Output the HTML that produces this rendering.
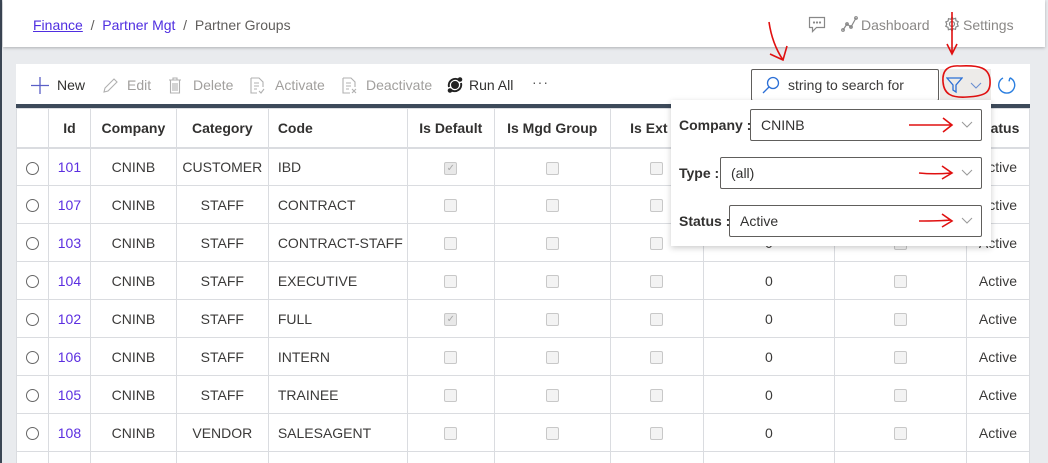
<!DOCTYPE html>
<html style="overflow:hidden;width:1048px;height:463px"><head><meta charset="utf-8"><style>
*{box-sizing:border-box;margin:0;padding:0}
body{width:1048px;height:463px;overflow:hidden;background:#e9ebee;font-family:"Liberation Sans",sans-serif;font-size:14px;color:#323130;position:relative}
.abs{position:absolute}
.hdr{left:3px;top:0;width:1042px;height:47px;background:#fff;box-shadow:0 1px 3px rgba(0,0,0,.25)}
.lstrip{left:0;top:0;width:2px;height:463px;background:#3b4654}
.tb{left:16px;top:64px;width:1014px;height:41px;background:#fff}
.tbar{left:16px;top:104px;width:1014px;height:4px;background:#3d4a5a}
.wrap{left:16px;top:108px;width:1014px;height:355px;background:#fff;overflow:hidden}
table{border-collapse:collapse;table-layout:fixed;position:absolute;left:0;top:0}
td,th{border:1px solid #dadce0;height:38px;text-align:center;font-size:14px;color:#3b3a39;font-weight:normal;white-space:nowrap;overflow:hidden}
th{font-weight:bold;color:#323130;height:39px;border-bottom:2px solid #dadce0}
td.l,th.l{text-align:left;padding-left:9px}
td.id{color:#5b2ee0}
.cb{display:inline-block;width:13px;height:13px;border:1px solid #c8c8c8;border-radius:2px;background:#f3f3f3;vertical-align:middle}
.rad{display:inline-block;width:13px;height:13px;border:1px solid #666;border-radius:50%;vertical-align:middle}
.tbi{top:77px;font-size:14px;color:#a19f9d}
.sel{border:1px solid #605e5c;border-radius:2px;height:32px;background:#fff;padding-left:10px;line-height:30px;font-size:14px}
.lab{font-weight:bold;font-size:14px;color:#323130}
</style></head><body>
<div class="abs lstrip"></div>
<div class="abs hdr"></div>
<div class="abs" style="left:33px;top:17px;font-size:14px;color:#605e5c"><span style="color:#4f2ee0;text-decoration:underline">Finance</span>&nbsp; / &nbsp;<span style="color:#4f2ee0">Partner Mgt</span>&nbsp; / &nbsp;Partner Groups</div>
<svg class="abs" style="left:808px;top:16px" width="18" height="17" viewBox="0 0 18 17" fill="none" stroke="#888" stroke-width="1.2"><path d="M1.5 1.5h15v10h-8l-4 4v-4h-3z"/><circle cx="6" cy="6.5" r=".5"/><circle cx="9" cy="6.5" r=".5"/><circle cx="12" cy="6.5" r=".5"/></svg>
<svg class="abs" style="left:841px;top:16px" width="17" height="16" viewBox="0 0 17 16" fill="none" stroke="#888" stroke-width="1.2"><path d="M2 14l4-6 4 3 5-9"/><circle cx="2" cy="14" r="1.3"/><circle cx="6" cy="8" r="1.3"/><circle cx="10" cy="11" r="1.3"/><circle cx="15" cy="2" r="1.3"/></svg>
<div class="abs" style="left:861px;top:17px;color:#8a8886">Dashboard</div>
<svg class="abs" style="left:944px;top:16px" width="16" height="16" viewBox="0 0 16 16" fill="none" stroke="#888" stroke-width="1.2"><circle cx="8" cy="8" r="2.5"/><path d="M8 1l1.3 2 2.3-.7.4 2.4 2.2 1-1 2.2 1 2.2-2.3.9-.4 2.4-2.3-.7L8 15l-1.3-2-2.3.7-.4-2.4-2.2-1 1-2.2-1-2.2 2.3-.9.4-2.4 2.3.7z"/></svg>
<div class="abs" style="left:963px;top:17px;color:#8a8886">Settings</div>
<svg class="abs" style="left:945px;top:10px" width="14" height="48" viewBox="0 0 14 48" fill="none" stroke="#e01010" stroke-width="1.6"><path d="M7 2v42M2 34l5 10 5-10"/></svg>

<div class="abs tb"></div>
<div class="abs tbar"></div>
<svg class="abs" style="left:31px;top:77px" width="18" height="17" viewBox="0 0 18 17" stroke="#5b5fc7" stroke-width="1.3"><path d="M9 0v17M0 8.5h18"/></svg>
<div class="abs tbi" style="left:57px;color:#323130">New</div>
<svg class="abs" style="left:102px;top:77px" width="17" height="17" viewBox="0 0 17 17" fill="none" stroke="#b0b0b0" stroke-width="1.1"><path d="M2 15l1-4 9-9 3 3-9 9z"/></svg>
<div class="abs tbi" style="left:127px">Edit</div>
<svg class="abs" style="left:168px;top:77px" width="14" height="17" viewBox="0 0 14 17" fill="none" stroke="#b0b0b0" stroke-width="1.1"><path d="M1 3h12M5 3V1h4v2M2.5 3v13h9V3M5 6v8M7 6v8M9 6v8"/></svg>
<div class="abs tbi" style="left:193px">Delete</div>
<svg class="abs" style="left:250px;top:77px" width="15" height="17" viewBox="0 0 15 17" fill="none" stroke="#b0b0b0" stroke-width="1.1"><path d="M1 1h8l4 4v5M1 1v15h6M4 6h5M4 9h5M4 12h3M9 14l2 2 3-4"/></svg>
<div class="abs tbi" style="left:275px">Activate</div>
<svg class="abs" style="left:342px;top:77px" width="16" height="17" viewBox="0 0 16 17" fill="none" stroke="#b0b0b0" stroke-width="1.1"><path d="M1 1h8l4 4v5M1 1v15h7M4 6h5M4 9h5M4 12h3M10 12l4 4M14 12l-4 4"/></svg>
<div class="abs tbi" style="left:366px">Deactivate</div>
<svg class="abs" style="left:446px;top:76px" width="18" height="18" viewBox="0 0 18 18" fill="none" stroke="#222" stroke-width="2"><path d="M3 11a6.5 6.5 0 0 1 10-7M15 7a6.5 6.5 0 0 1-10 7"/><circle cx="9" cy="9" r="3" fill="#222"/><circle cx="14" cy="3.5" r="1.3" fill="#222"/><circle cx="4" cy="14.5" r="1.3" fill="#222"/></svg>
<div class="abs tbi" style="left:469px;color:#323130">Run All</div>
<div class="abs tbi" style="left:532px;color:#555;top:74px;letter-spacing:1px">···</div>

<div class="abs" style="left:751px;top:69px;width:188px;height:32px;border:1px solid #605e5c;border-radius:2px;background:#fff"></div>
<svg class="abs" style="left:762px;top:76px" width="18" height="18" viewBox="0 0 18 18" fill="none" stroke="#2b6fd6" stroke-width="1.3"><circle cx="11" cy="7" r="5.5"/><path d="M7 11l-6 6"/></svg>
<div class="abs" style="left:788px;top:77px;color:#3b3a39">string to search for</div>
<div class="abs" style="left:940px;top:69px;width:51px;height:32px;background:#edebe9"></div>
<svg class="abs" style="left:946px;top:76px" width="17" height="18" viewBox="0 0 17 18" fill="none" stroke="#2b6fd6" stroke-width="1.3"><path d="M1 2h15l-6 7v7l-3-2V9z"/></svg>
<svg class="abs" style="left:970px;top:82px" width="12" height="7" viewBox="0 0 12 7" fill="none" stroke="#6a8fd0" stroke-width="1.1"><path d="M1 1l5 5 5-5"/></svg>
<svg class="abs" style="left:940px;top:62px" width="54" height="40" viewBox="0 0 54 40" fill="none" stroke="#e01010" stroke-width="1.6"><path d="M20 4C8 3 2 8 3 20c1 12 8 16 24 15 18-1 24-4 23-17C49 6 40 3 20 4z"/></svg>
<svg class="abs" style="left:997px;top:75px" width="20" height="20" viewBox="0 0 20 20" fill="none" stroke="#2b7fe0" stroke-width="1.4"><path d="M13 2.8A8 8 0 1 1 6 3"/><path d="M13 2.8l-1 3.5"/></svg>
<svg class="abs" style="left:766px;top:20px" width="24" height="44" viewBox="0 0 24 44" fill="none" stroke="#e01010" stroke-width="1.6"><path d="M3 2c2 14 6 26 14 38M4 34l13 6 4-14"/></svg>

<div class="abs wrap">
<table>
<colgroup><col style="width:32px"><col style="width:42px"><col style="width:86px"><col style="width:92px"><col style="width:139px"><col style="width:87px"><col style="width:116px"><col style="width:93px"><col style="width:132px"><col style="width:132px"><col style="width:63px"></colgroup>
<tr><th></th><th>Id</th><th>Company</th><th>Category</th><th class="l">Code</th><th>Is Default</th><th>Is Mgd Group</th><th>Is Ext M</th><th></th><th></th><th>Status</th></tr>
<tr><td><span class="rad"></span></td><td class="id">101</td><td>CNINB</td><td>CUSTOMER</td><td class="l">IBD</td><td><span class="cb" style="background:#e8e8e8;font-size:10px;line-height:11px;color:#aaa">✓</span></td><td><span class="cb"></span></td><td><span class="cb"></span></td><td>0</td><td><span class="cb"></span></td><td>Active</td></tr>
<tr><td><span class="rad"></span></td><td class="id">107</td><td>CNINB</td><td>STAFF</td><td class="l">CONTRACT</td><td><span class="cb"></span></td><td><span class="cb"></span></td><td><span class="cb"></span></td><td>0</td><td><span class="cb"></span></td><td>Active</td></tr>
<tr><td><span class="rad"></span></td><td class="id">103</td><td>CNINB</td><td>STAFF</td><td class="l">CONTRACT-STAFF</td><td><span class="cb"></span></td><td><span class="cb"></span></td><td><span class="cb"></span></td><td>0</td><td><span class="cb"></span></td><td>Active</td></tr>
<tr><td><span class="rad"></span></td><td class="id">104</td><td>CNINB</td><td>STAFF</td><td class="l">EXECUTIVE</td><td><span class="cb"></span></td><td><span class="cb"></span></td><td><span class="cb"></span></td><td>0</td><td><span class="cb"></span></td><td>Active</td></tr>
<tr><td><span class="rad"></span></td><td class="id">102</td><td>CNINB</td><td>STAFF</td><td class="l">FULL</td><td><span class="cb" style="background:#e8e8e8;font-size:10px;line-height:11px;color:#aaa">✓</span></td><td><span class="cb"></span></td><td><span class="cb"></span></td><td>0</td><td><span class="cb"></span></td><td>Active</td></tr>
<tr><td><span class="rad"></span></td><td class="id">106</td><td>CNINB</td><td>STAFF</td><td class="l">INTERN</td><td><span class="cb"></span></td><td><span class="cb"></span></td><td><span class="cb"></span></td><td>0</td><td><span class="cb"></span></td><td>Active</td></tr>
<tr><td><span class="rad"></span></td><td class="id">105</td><td>CNINB</td><td>STAFF</td><td class="l">TRAINEE</td><td><span class="cb"></span></td><td><span class="cb"></span></td><td><span class="cb"></span></td><td>0</td><td><span class="cb"></span></td><td>Active</td></tr>
<tr><td><span class="rad"></span></td><td class="id">108</td><td>CNINB</td><td>VENDOR</td><td class="l">SALESAGENT</td><td><span class="cb"></span></td><td><span class="cb"></span></td><td><span class="cb"></span></td><td>0</td><td><span class="cb"></span></td><td>Active</td></tr>
<tr><td></td><td></td><td></td><td></td><td></td><td></td><td></td><td></td><td></td><td></td><td></td></tr>
</table>
</div>

<div class="abs" style="left:671px;top:100px;width:320px;height:146px;background:#fff;box-shadow:0 2px 6px rgba(0,0,0,.2)"></div>
<div class="abs lab" style="left:679px;top:117px">Company :</div>
<div class="abs sel" style="left:750px;top:109px;width:232px">CNINB</div>
<div class="abs lab" style="left:679px;top:165px">Type :</div>
<div class="abs sel" style="left:720px;top:157px;width:262px">(all)</div>
<div class="abs lab" style="left:679px;top:213px">Status :</div>
<div class="abs sel" style="left:729px;top:205px;width:253px">Active</div>
<svg class="abs" style="left:908px;top:112px" width="70" height="120" viewBox="0 0 70 120" fill="none">
<g stroke="#e01010" stroke-width="1.6"><path d="M1 13h42M35 6l9 7-9 7"/><path d="M11 61c10 1 21 1 32 0M34 54l10 7-10 6"/><path d="M11 109c10 0 21 0 32-1M34 102l10 7-10 6"/></g>
<g stroke="#999" stroke-width="1"><path d="M54 10l5 5 5-5M54 58l5 5 5-5M54 106l5 5 5-5"/></g></svg>
</body></html>
